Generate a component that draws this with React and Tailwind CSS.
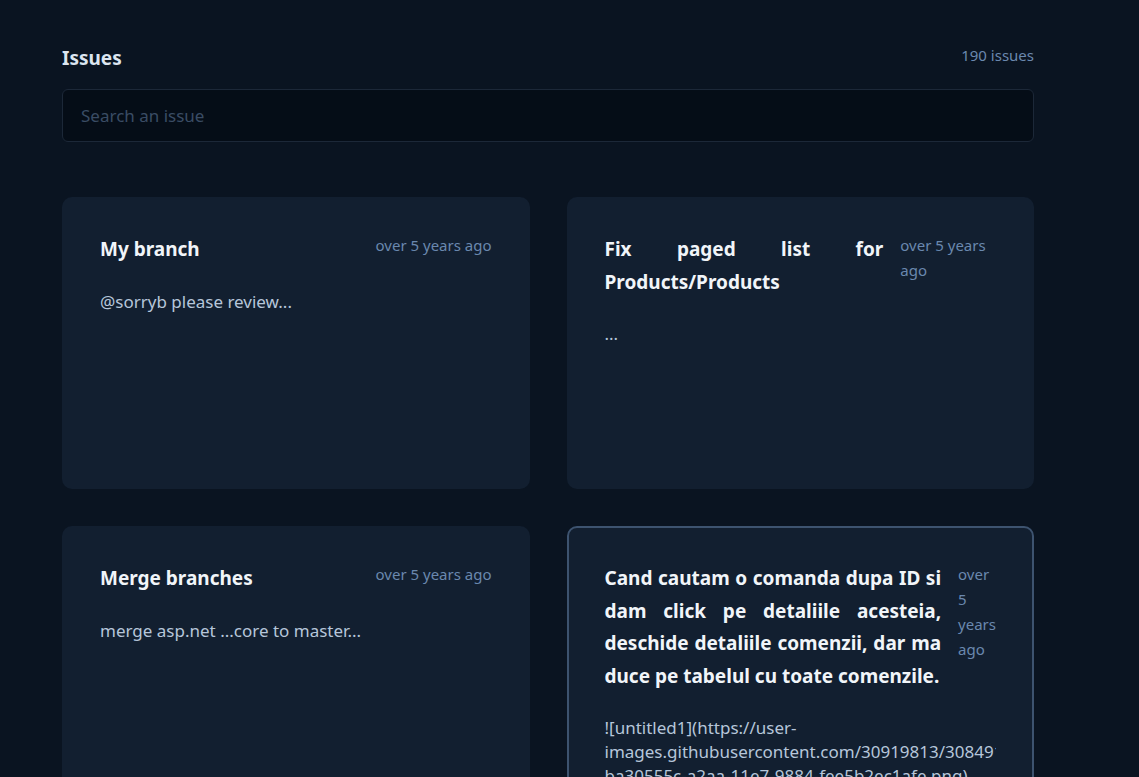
const issues = [
  {
    title: 'My branch',
    time: 'over 5 years ago',
    body: '@sorryb please review...',
  },
  {
    title: 'Fix paged list for Products/Products',
    time: 'over 5 years ago',
    body: '...',
  },
  {
    title: 'Merge branches',
    time: 'over 5 years ago',
    body: 'merge asp.net ...core to master...',
  },
  {
    title: 'Cand cautam o comanda dupa ID si dam click pe detaliile acesteia, deschide detaliile comenzii, dar ma duce pe tabelul cu toate comenzile.',
    time: 'over 5 years ago',
    body: '![untitled1](https://user-images.githubusercontent.com/30919813/30849127-ba30555c-a2aa-11e7-9884-fee5b2ec1afe.png)',
    active: true,
  },
];

const IssueCard = ({ issue }) => {
  return (
    <div
      className={`h-[292px] overflow-hidden rounded-[10px] border-2 bg-[#121f30] px-[36px] pt-[34px] ${
        issue.active ? 'border-[#3d536f]' : 'border-transparent'
      }`}
    >
      <div className="flex">
        <h3 className="grow text-justify text-[19px] font-bold leading-[32.5px] text-[#f1f5f9]">
          {issue.title}
        </h3>
        <span className="ml-[17px] text-[15px] leading-[25px] text-[#6a88ae]">
          {issue.time}
        </span>
      </div>
      <p className="mt-[24px] overflow-hidden text-[17px] leading-[24px] text-[#b6c6da]">
        {issue.body}
      </p>
    </div>
  );
};

const App = () => {
  return (
    <div
      className="min-h-screen bg-[#0a1421] pt-[44px]"
      style={{ fontFamily: '"Noto Sans", Lato, sans-serif' }}
    >
      <div className="ml-[62px] w-[972px]">
        <div className="flex items-start justify-between">
          <h1 className="text-[19px] font-bold leading-[28px] text-[#dce5f0]">Issues</h1>
          <span className="text-[15px] leading-[22px] text-[#6a88ae]">190 issues</span>
        </div>
        <input
          type="text"
          placeholder="Search an issue"
          className="mt-[17px] h-[53px] w-full rounded-[6px] border border-[#1c2838] bg-[#050d17] px-[18px] text-[17px] text-[#b6c6da] placeholder-[#3a4c64] outline-none"
        />
        <div className="mt-[55px] grid grid-cols-2 gap-[37px]">
          {issues.map((issue, i) => (
            <IssueCard key={i} issue={issue} />
          ))}
        </div>
      </div>
    </div>
  );
};

export default App;
